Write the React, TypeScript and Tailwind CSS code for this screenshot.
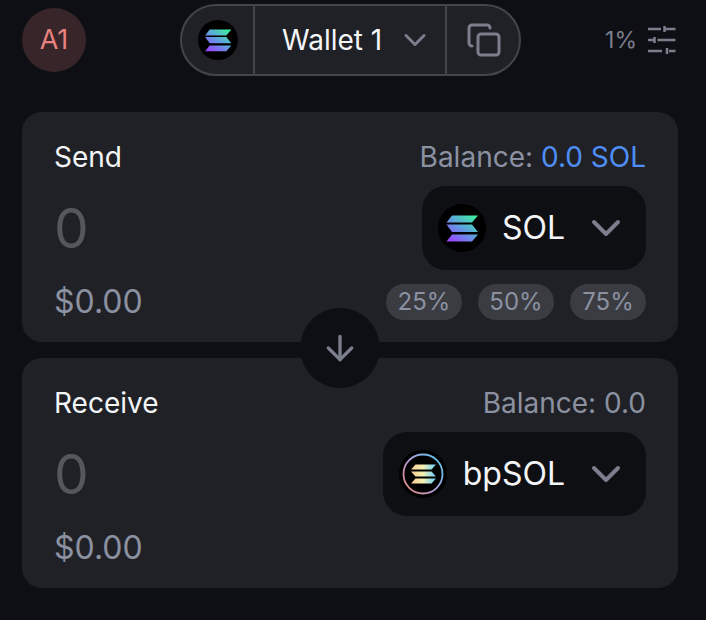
import React from 'react';
import { ArrowDown, ChevronDown, Copy } from 'lucide-react';

function SolanaMark({ size, id }: { size: number; id: string }) {
  return (
    <svg width={size} height={size} viewBox="0 0 48 48" className="shrink-0">
      <defs>
        <linearGradient id={id} x1="14" y1="38" x2="34" y2="10" gradientUnits="userSpaceOnUse">
          <stop offset="0" stopColor="#9945ff" />
          <stop offset="0.5" stopColor="#5f9fe0" />
          <stop offset="1" stopColor="#3ff0a0" />
        </linearGradient>
      </defs>
      <circle cx="24" cy="24" r="24" fill="#000" />
      <polygon points="14,11.5 40,11.5 34,18.5 8.5,18.5" fill={`url(#${id})`} />
      <polygon points="8.5,20.5 34,20.5 40,28 14,28" fill={`url(#${id})`} />
      <polygon points="14,30.5 40,30.5 34,37.5 8.5,37.5" fill={`url(#${id})`} />
    </svg>
  );
}

function BpSolMark({ size }: { size: number }) {
  return (
    <svg width={size} height={size} viewBox="0 0 48 48" className="shrink-0">
      <defs>
        <linearGradient id="bp-ring" x1="4" y1="40" x2="44" y2="8" gradientUnits="userSpaceOnUse">
          <stop offset="0" stopColor="#e88a7c" />
          <stop offset="0.45" stopColor="#b49ad8" />
          <stop offset="1" stopColor="#58c8f0" />
        </linearGradient>
        <linearGradient id="bp-bars" x1="12" y1="0" x2="36" y2="0" gradientUnits="userSpaceOnUse">
          <stop offset="0" stopColor="#f8c890" />
          <stop offset="0.5" stopColor="#f4f0b0" />
          <stop offset="1" stopColor="#70d0f8" />
        </linearGradient>
      </defs>
      <circle cx="24" cy="24" r="24" fill="#000" />
      <circle cx="24" cy="24" r="19.5" fill="none" stroke="url(#bp-ring)" strokeWidth="1.8" />
      <polygon points="16.5,14.5 37,14.5 32.500,19.5 12,19.5" fill="url(#bp-bars)" />
      <polygon points="12,21.5 32.500,21.5 37,26.5 16.5,26.5" fill="url(#bp-bars)" />
      <polygon points="16.5,28.5 37,28.5 32.500,33.5 12,33.5" fill="url(#bp-bars)" />
    </svg>
  );
}

function SlidersIcon() {
  return (
    <svg width="28" height="28" viewBox="0 0 28 28" fill="none" stroke="#7b7e8c" strokeWidth="2.500" className="mr-[2px] shrink-0">
      <path d="M0 3h13M16.500 3h11M16.500 0v6" />
      <path d="M0 14h6M9.500 14h18M6.500 11v6" />
      <path d="M0 25h14M21 25h6.500M19 22v6" />
    </svg>
  );
}

function TokenButton({ name, icon }: { name: string; icon: React.ReactNode }) {
  return (
    <button className="flex h-[84px] items-center rounded-[24px] bg-[#0e0f13] pl-4 pr-4">
      {icon}
      <span className="ml-4 text-[32px] leading-none text-[#f4f5f7]">{name}</span>
      <ChevronDown size={48} strokeWidth={2} className="ml-[17px] text-[#7b7e8c]" />
    </button>
  );
}

function SwapCard({
  label,
  balance,
  token,
  footer,
}: {
  label: string;
  balance: React.ReactNode;
  token: React.ReactNode;
  footer?: React.ReactNode;
}) {
  return (
    <section className="h-[230px] rounded-[20px] bg-[#202126] px-8 pt-[26px]">
      <div className="flex h-[38px] items-center justify-between">
        <span className="text-[28px] text-[#f4f5f7]">{label}</span>
        <span className="text-[28px] text-[#8b91a1]">{balance}</span>
      </div>
      <div className="mt-[10px] flex h-[84px] items-center justify-between">
        <span className="text-[55px] leading-none text-[#55575d]">0</span>
        {token}
      </div>
      <div className="mt-[14px] flex h-9 items-center justify-between">
        <span className="text-[32px] text-[#8b91a1]">$0.00</span>
        {footer}
      </div>
    </section>
  );
}

export default function App() {
  return (
    <div className="h-[620px] w-[706px] overflow-hidden bg-[#0e0f14] pl-[22px] pr-[28px] pt-1 font-['Inter',sans-serif]">
      <header className="flex h-[72px] items-center">
        <div className="flex h-16 w-16 items-center justify-center rounded-full bg-[#372529] text-[27px] text-[#e8827f]">
          A1
        </div>
        <div className="ml-[94px] flex h-[72px] w-[341px] items-stretch rounded-full border-2 border-[#434549] bg-[#202126]">
          <div className="flex w-[73px] items-center justify-center border-r-2 border-[#434549]">
            <SolanaMark size={40} id="sol-top" />
          </div>
          <div className="flex w-[192px] items-center border-r-2 border-[#434549] pl-[27px]">
            <span className="text-[28px] leading-none text-[#f4f5f7]">Wallet 1</span>
            <ChevronDown size={36} strokeWidth={2} className="ml-[15px] text-[#7b7e8c]" />
          </div>
          <div className="flex flex-1 items-center pl-[19px]">
            <Copy size={36} strokeWidth={2} className="text-[#7b7e8c]" />
          </div>
        </div>
        <div className="ml-auto flex items-center gap-[11px]">
          <span className="text-[23px] text-[#7b7e8c]">1%</span>
          <SlidersIcon />
        </div>
      </header>

      <main className="relative mt-9 flex flex-col gap-4">
        <SwapCard
          label="Send"
          balance={
            <>
              Balance: <span className="text-[#4f8ef7]">0.0 SOL</span>
            </>
          }
          token={<TokenButton name="SOL" icon={<SolanaMark size={48} id="sol-send" />} />}
          footer={
            <div className="flex gap-4">
              {['25%', '50%', '75%'].map((pct) => (
                <button
                  key={pct}
                  className="flex h-9 w-[76px] items-center justify-center rounded-full bg-[#3a3c42] text-[24px] text-[#8b91a1]"
                >
                  {pct}
                </button>
              ))}
            </div>
          }
        />
        <div className="absolute left-[278px] top-[196px] flex h-20 w-20 items-center justify-center rounded-full bg-[#0e0f14]">
          <ArrowDown size={40} strokeWidth={2} className="text-[#7b7e8c]" />
        </div>
        <SwapCard label="Receive" balance="Balance: 0.0" token={<TokenButton name="bpSOL" icon={<BpSolMark size={48} />} />} />
      </main>
    </div>
  );
}
